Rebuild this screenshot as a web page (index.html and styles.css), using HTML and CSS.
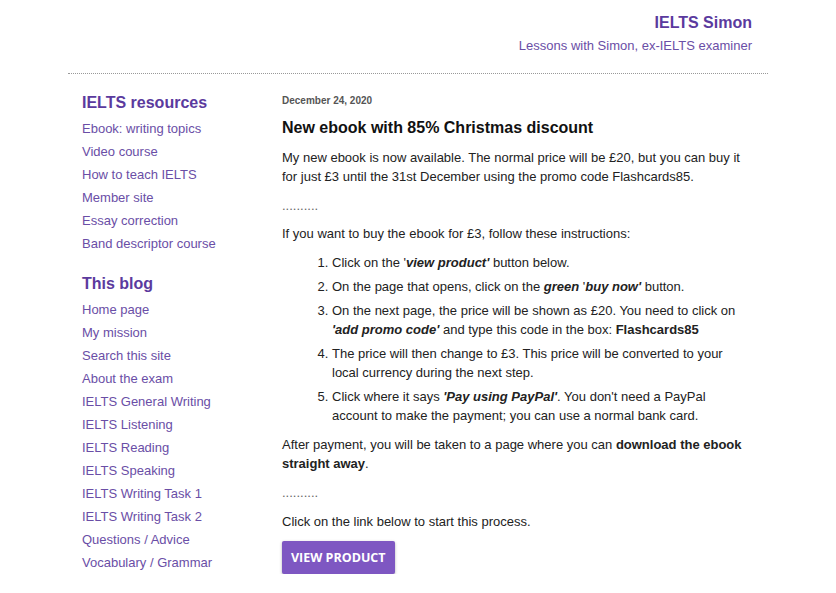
FILE: index.html
```html
<!DOCTYPE html>
<html>
<head>
<meta charset="utf-8">
<link rel="stylesheet" href="styles.css">
</head>
<body>
<div class="page">
  <header class="header">
    <div class="site-title">IELTS Simon</div>
    <div class="site-desc">Lessons with Simon, ex-IELTS examiner</div>
  </header>
  <div class="columns">
    <aside class="sidebar">
      <h2 class="side-head">IELTS resources</h2>
      <ul class="side-list">
        <li><a href="#">Ebook: writing topics</a></li>
        <li><a href="#">Video course</a></li>
        <li><a href="#">How to teach IELTS</a></li>
        <li><a href="#">Member site</a></li>
        <li><a href="#">Essay correction</a></li>
        <li><a href="#">Band descriptor course</a></li>
      </ul>
      <h2 class="side-head second">This blog</h2>
      <ul class="side-list">
        <li><a href="#">Home page</a></li>
        <li><a href="#">My mission</a></li>
        <li><a href="#">Search this site</a></li>
        <li><a href="#">About the exam</a></li>
        <li><a href="#">IELTS General Writing</a></li>
        <li><a href="#">IELTS Listening</a></li>
        <li><a href="#">IELTS Reading</a></li>
        <li><a href="#">IELTS Speaking</a></li>
        <li><a href="#">IELTS Writing Task 1</a></li>
        <li><a href="#">IELTS Writing Task 2</a></li>
        <li><a href="#">Questions / Advice</a></li>
        <li><a href="#">Vocabulary / Grammar</a></li>
      </ul>
    </aside>
    <main class="main">
      <div class="date">December 24, 2020</div>
      <h1 class="post-title">New ebook with 85% Christmas discount</h1>
      <p>My new ebook is now available. The normal price will be £20, but you can buy it for just £3 until the 31st December using the promo code Flashcards85.</p>
      <p class="dots">..........</p>
      <p class="after-dots">If you want to buy the ebook for £3, follow these instructions:</p>
      <ol class="steps">
        <li>Click on the '<b><i>view product'</i></b> button below.</li>
        <li>On the page that opens, click on the <b><i>green</i></b> '<b><i>buy now'</i></b> button.</li>
        <li>On the next page, the price will be shown as £20. You need to click on <b><i>'add promo code'</i></b> and type this code in the box: <b>Flashcards85</b></li>
        <li>The price will then change to £3. This price will be converted to your local currency during the next step.</li>
        <li>Click where it says <b><i>'Pay using PayPal'</i></b>. You don't need a PayPal account to make the payment; you can use a normal bank card.</li>
      </ol>
      <p>After payment, you will be taken to a page where you can <b>download the ebook straight away</b>.</p>
      <p class="dots">..........</p>
      <p>Click on the link below to start this process.</p>
      <a class="btn" href="#">VIEW PRODUCT</a>
    </main>
  </div>
</div>
</body>
</html>
```
FILE: styles.css
```css
html, body {
  margin: 0;
  padding: 0;
  background: #fff;
}
body {
  font-family: "Liberation Sans", Arial, sans-serif;
  font-size: 13px;
  color: #222;
}
.page {
  width: 700px;
  margin: 0 auto;
}
.header {
  text-align: right;
  padding: 13px 16px 0 0;
  height: 74px;
  box-sizing: border-box;
  border-bottom: 1px dotted #999;
}
.site-title {
  font-size: 16px;
  font-weight: bold;
  color: #5b3a9e;
  line-height: 20px;
}
.site-desc {
  font-size: 13px;
  color: #6a4ea6;
  line-height: 19px;
  margin-top: 3px;
}
.columns {
  display: flex;
}
.sidebar {
  width: 200px;
  padding-left: 14px;
  padding-top: 18px;
  flex: none;
}
.side-head {
  margin: 0;
  font-size: 16px;
  font-weight: bold;
  color: #5b3a9e;
  line-height: 22px;
}
.side-head.second {
  margin-top: 18px;
}
.side-list {
  list-style: none;
  margin: 3px 0 0;
  padding: 0;
}
.side-list li {
  line-height: 23px;
}
.side-list a {
  color: #6a4ea6;
  text-decoration: none;
}
.main {
  width: 470px;
  padding-top: 20px;
}
.date {
  font-size: 10px;
  font-weight: bold;
  color: #555;
  line-height: 14px;
}
.post-title {
  font-size: 16px;
  font-weight: bold;
  color: #111;
  margin: 10px 0 0;
  line-height: 20px;
}
.main p {
  margin: 10px 0 0;
  line-height: 19px;
}
.main p.after-dots {
  margin-top: 9px;
}
.dots {
  color: #666;
}
.steps {
  margin: 10px 0 0;
  padding-left: 50px;
}
.steps li {
  line-height: 19px;
  margin-bottom: 5px;
}
.main .steps + p {
  margin-top: 10px;
}
.btn {
  display: inline-block;
  margin-top: 10px;
  background: #7e57c2;
  color: #fff;
  font-family: "Open Sans", sans-serif;
  font-weight: bold;
  font-size: 12.5px;
  line-height: 33px;
  height: 33px;
  padding: 0 9px;
  border-radius: 2px;
  text-decoration: none;
  box-shadow: 0 1px 3px rgba(0,0,0,0.3);
}
```
